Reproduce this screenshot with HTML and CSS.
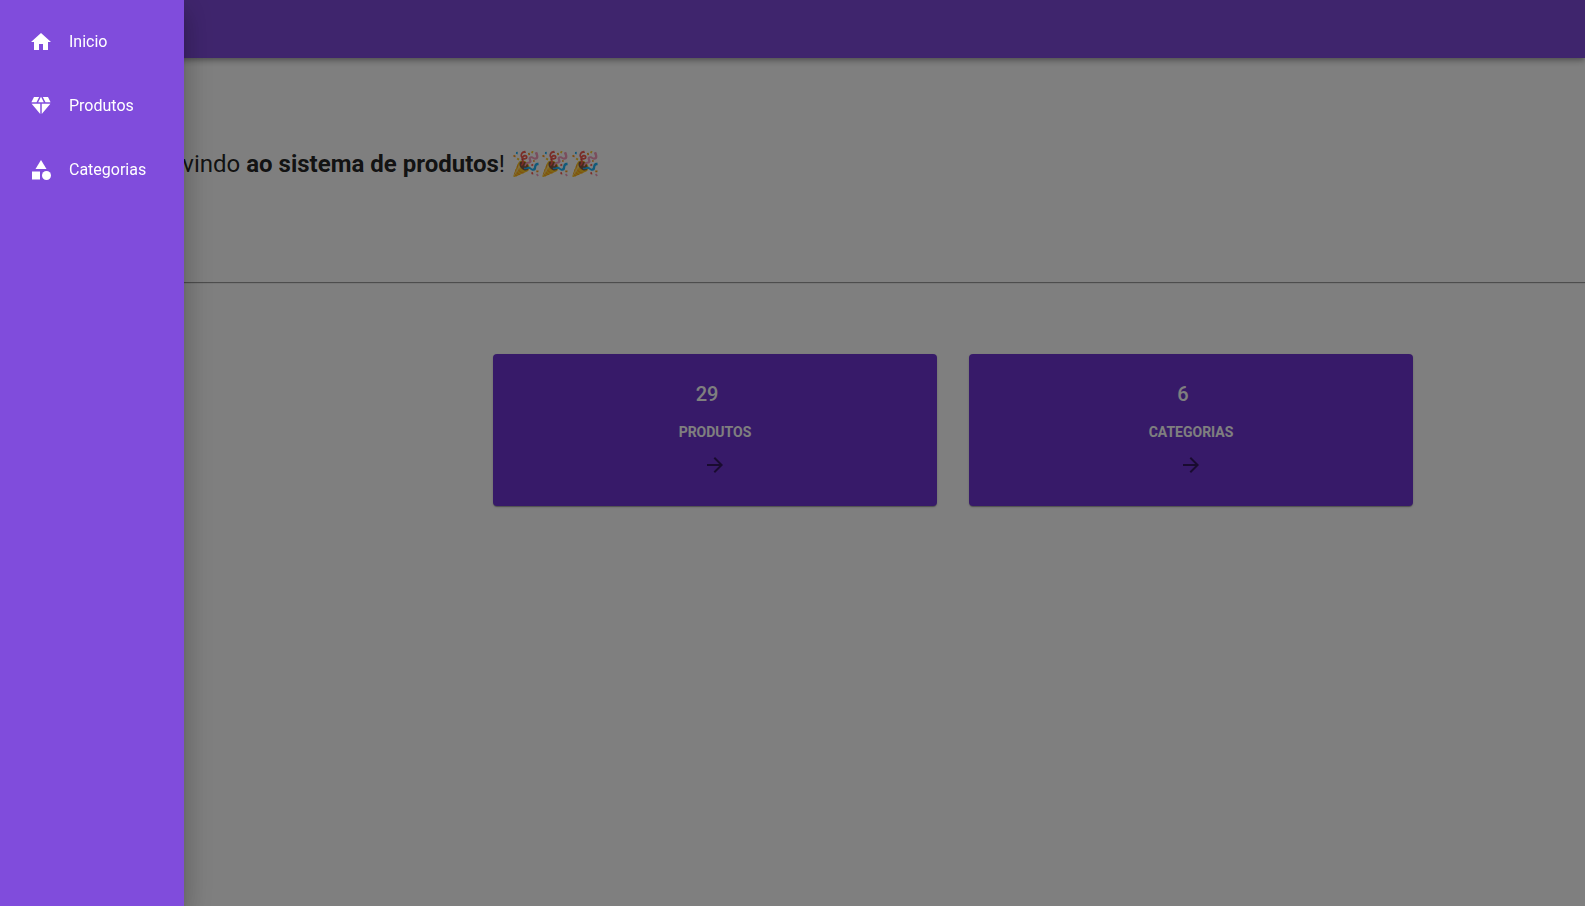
FILE: index.html
```html
<!DOCTYPE html>
<html lang="pt-BR">
<head>
<meta charset="utf-8">
<meta name="viewport" content="width=device-width, initial-scale=1">
<title>Sistema de produtos</title>
<link rel="stylesheet" href="styles.css">
</head>
<body>
<header class="app-bar"></header>
<main class="page">
  <section class="welcome">
    <h1 class="welcome-title">Bem-vindo <strong>ao sistema de produtos</strong>! 🎉🎉🎉</h1>
  </section>
  <hr class="divider">
  <section class="cards">
    <a class="card" href="#produtos">
      <span class="card-count">29</span>
      <span class="card-label">PRODUTOS</span>
      <svg class="icon card-arrow" viewBox="0 0 24 24" aria-hidden="true"><path d="m12 4-1.41 1.41L16.17 11H4v2h12.17l-5.58 5.59L12 20l8-8z"/></svg>
    </a>
    <a class="card" href="#categorias">
      <span class="card-count">6</span>
      <span class="card-label">CATEGORIAS</span>
      <svg class="icon card-arrow" viewBox="0 0 24 24" aria-hidden="true"><path d="m12 4-1.41 1.41L16.17 11H4v2h12.17l-5.58 5.59L12 20l8-8z"/></svg>
    </a>
  </section>
</main>
<div class="backdrop"></div>
<nav class="drawer">
  <a class="drawer-item" href="#inicio">
    <svg class="icon" viewBox="0 0 24 24" aria-hidden="true"><path d="M10 20v-6h4v6h5v-8h3L12 3 2 12h3v8z"/></svg>
    <span>Inicio</span>
  </a>
  <a class="drawer-item" href="#produtos">
    <svg class="icon" viewBox="0 0 24 24" aria-hidden="true"><path d="M12.16 3h-.32L9.21 8.25h5.58zM16.46 8.25h5.16L19 3h-5.16zM21.38 9.75h-8.63V20.1zM11.25 20.1V9.75H2.62zM7.54 8.25 10.16 3H5L2.38 8.25z"/></svg>
    <span>Produtos</span>
  </a>
  <a class="drawer-item" href="#categorias">
    <svg class="icon" viewBox="0 0 24 24" aria-hidden="true"><path d="m12 2-5.5 9h11z"/><circle cx="17.5" cy="17.5" r="4.5"/><path d="M3 13.5h8v8H3z"/></svg>
    <span>Categorias</span>
  </a>
</nav>
</body>
</html>
```

FILE: styles.css
```css
* {
  box-sizing: border-box;
}

body {
  margin: 0;
  min-height: 100vh;
  background: #fff;
  color: rgba(0, 0, 0, 0.87);
  font-family: Roboto, "Noto Color Emoji", sans-serif;
  font-size: 16px;
  line-height: 24px;
}

a {
  color: inherit;
  text-decoration: none;
}

.icon {
  width: 24px;
  height: 24px;
  flex-shrink: 0;
  fill: currentColor;
}

.app-bar {
  position: relative;
  height: 58px;
  background: #7f4bdb;
  box-shadow: 0 2px 4px -1px rgba(0, 0, 0, 0.2), 0 4px 5px rgba(0, 0, 0, 0.14), 0 1px 10px rgba(0, 0, 0, 0.12);
}

.welcome {
  padding: 88px 24px 100px 127px;
}

.welcome-title {
  margin: 0;
  font-size: 24px;
  font-weight: 400;
  line-height: 36px;
}

.divider {
  margin: 0;
  border: 0;
  border-top: 1px solid #9a9a9a;
  border-bottom: 1px solid #eee;
}

.cards {
  display: grid;
  grid-template-columns: 1fr 1fr;
  gap: 32px;
  padding: 70px 172px 32px 493px;
}

.card {
  display: flex;
  flex-direction: column;
  align-items: center;
  padding: 24px 16px 29px;
  border-radius: 4px;
  background: #6e34d2;
  box-shadow: 0 2px 1px -1px rgba(0, 0, 0, 0.2), 0 1px 1px rgba(0, 0, 0, 0.14), 0 1px 3px rgba(0, 0, 0, 0.12);
}

.card-count {
  margin-right: 16px;
  color: #fff;
  font-size: 20px;
  font-weight: 500;
  line-height: 32px;
}

.card-label {
  margin: 10px 0 9px;
  color: #fff;
  font-size: 14px;
  font-weight: 700;
}

.card-arrow {
  color: rgba(0, 0, 0, 0.54);
}

.backdrop {
  position: fixed;
  inset: 0;
  background: rgba(0, 0, 0, 0.5);
}

.drawer {
  position: fixed;
  inset: 0 auto 0 0;
  display: flex;
  flex-direction: column;
  padding: 10px 0;
  background: #804cdc;
  color: #fff;
  box-shadow: 0 8px 10px -5px rgba(0, 0, 0, 0.2), 0 16px 24px 2px rgba(0, 0, 0, 0.14), 0 6px 30px 5px rgba(0, 0, 0, 0.12);
}

.drawer-item {
  display: flex;
  align-items: center;
  gap: 16px;
  padding: 20px 38px 20px 29px;
}
```
